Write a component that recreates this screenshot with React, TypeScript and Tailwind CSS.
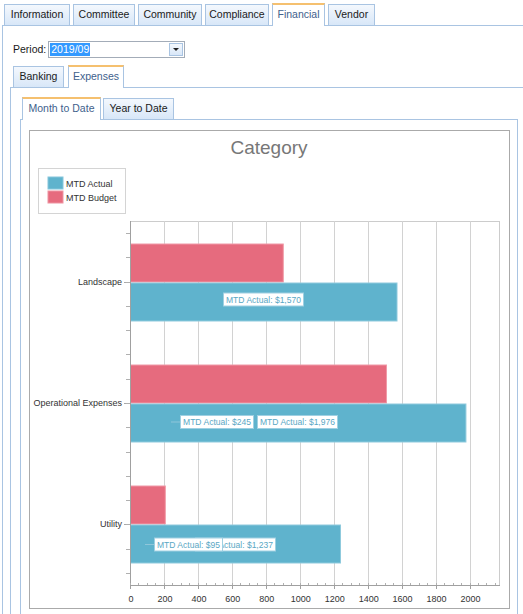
import React from 'react';

const FONT = { fontFamily: '"Liberation Sans", Arial, sans-serif' };

type TabProps = { label: string; w: number; selected?: boolean };

function Tab({ label, w, selected }: TabProps) {
  if (selected) {
    return (
      <div
        className="relative -mb-px flex h-[23px] items-center justify-center border-x border-[#a9c4e2] border-t-2 border-t-[#f5c06f] bg-white pb-px text-[#41618c]"
        style={{ width: w }}
      >
        {label}
      </div>
    );
  }
  return (
    <div
      className="flex h-[21px] items-center justify-center border border-b-0 border-[#a9c4e2] bg-gradient-to-b from-[#f4f8fd] to-[#d8e7f8] text-[#1a1a1a]"
      style={{ width: w }}
    >
      {label}
    </div>
  );
}

const X0 = 100; // axis x inside chart box
const SCALE = 0.16975;
const PLOT_TOP = 90;
const PLOT_BOTTOM = 454;
const PLOT_RIGHT = 469;
const BAND = (PLOT_BOTTOM - PLOT_TOP) / 3;

const data = [
  { name: 'Landscape', budget: 900, actual: 1570 },
  { name: 'Operational Expenses', budget: 1508, actual: 1976 },
  { name: 'Utility', budget: 205, actual: 1237 },
];

function xv(v: number) {
  return X0 + v * SCALE;
}

function DataLabel({ x, y, w, text, lead }: { x: number; y: number; w: number; text: string; lead?: number }) {
  return (
    <g>
      {lead !== undefined && <line x1={lead} y1={y} x2={x} y2={y} stroke="#8fc6da" strokeWidth={1} />}
      <rect x={x + 0.5} y={y - 6.5} width={w} height={13} fill="#ffffff" stroke="#9fd0e2" strokeWidth={1} />
      <text
        x={x + 3}
        y={y + 3.4}
        fontSize={9.5}
        fill="#5aa7c4"
        textLength={w - 5}
        lengthAdjust="spacingAndGlyphs"
        style={FONT}
      >
        {text}
      </text>
    </g>
  );
}

function Chart() {
  const grid = Array.from({ length: 11 }, (_, i) => i * 200);
  const minor = Array.from({ length: 44 }, (_, i) => i * 50).filter((v) => xv(v) < PLOT_RIGHT);
  const yTicks = Array.from({ length: 15 }, (_, i) => PLOT_TOP + BAND / 10 + (i * BAND) / 5);

  return (
    <svg width={479} height={477} className="block" style={FONT}>
      <text x={239} y={23} textAnchor="middle" fontSize={19} fill="#777777">
        Category
      </text>

      <rect x={8.5} y={37.5} width={87} height={45} fill="#ffffff" stroke="#d4d4d4" />
      <rect x={18} y={46} width={15} height={12} fill="#5fb3cd" stroke="#86c6db" />
      <rect x={18} y={60} width={15} height={12} fill="#e66b7e" stroke="#ee94a1" />
      <text x={36} y={55.5} fontSize={9} fill="#333333">MTD Actual</text>
      <text x={36} y={69.5} fontSize={9} fill="#333333">MTD Budget</text>

      <rect x={X0 + 0.5} y={PLOT_TOP + 0.5} width={PLOT_RIGHT - X0} height={PLOT_BOTTOM - PLOT_TOP} fill="#ffffff" stroke="#cccccc" />
      {grid.map((v) => (
        <line key={v} x1={Math.round(xv(v)) + 0.5} y1={PLOT_TOP} x2={Math.round(xv(v)) + 0.5} y2={PLOT_BOTTOM} stroke="#d2d2d2" />
      ))}

      {data.map((d, i) => {
        const c = Math.round(PLOT_TOP + BAND * (i + 0.5));
        return (
          <g key={d.name}>
            <rect x={X0 + 0.5} y={c - 38} width={d.budget * SCALE} height={38} fill="#e66b7e" stroke="#f09aa7" strokeWidth={1} />
            <rect x={X0 + 0.5} y={c + 1} width={d.actual * SCALE} height={38} fill="#5fb3cd" stroke="#8fcadd" strokeWidth={1} />
            <text x={92} y={c + 3} textAnchor="end" fontSize={9} fill="#333333">
              {d.name}
            </text>
            <line x1={94} y1={c + 0.5} x2={X0} y2={c + 0.5} stroke="#a8a8a8" />
          </g>
        );
      })}

      <DataLabel x={193} y={168.5} w={80} text="MTD Actual: $1,570" />
      <DataLabel x={150} y={291} w={73} text="MTD Actual: $245" lead={141} />
      <DataLabel x={227} y={291} w={80} text="MTD Actual: $1,976" />
      <DataLabel x={165} y={413.5} w={80} text="MTD Actual: $1,237" />
      <DataLabel x={124} y={413.5} w={68} text="MTD Actual: $95" lead={115} />

      <line x1={X0 + 0.5} y1={PLOT_TOP} x2={X0 + 0.5} y2={PLOT_BOTTOM + 1} stroke="#a0a0a0" />
      <line x1={X0} y1={PLOT_BOTTOM + 0.5} x2={PLOT_RIGHT + 1} y2={PLOT_BOTTOM + 0.5} stroke="#a0a0a0" />
      {yTicks.map((y) => (
        <line key={y} x1={96} y1={Math.round(y) + 0.5} x2={X0} y2={Math.round(y) + 0.5} stroke="#b0b0b0" />
      ))}
      {minor.map((v) => (
        <line key={v} x1={Math.round(xv(v)) + 0.5} y1={PLOT_BOTTOM - 2} x2={Math.round(xv(v)) + 0.5} y2={PLOT_BOTTOM} stroke="#b0b0b0" />
      ))}
      {grid.map((v) => (
        <g key={v}>
          <line x1={Math.round(xv(v)) + 0.5} y1={PLOT_BOTTOM} x2={Math.round(xv(v)) + 0.5} y2={PLOT_BOTTOM + 4} stroke="#a0a0a0" />
          <text x={xv(v) + 1} y={471} textAnchor="middle" fontSize={9} fill="#333333">
            {v}
          </text>
        </g>
      ))}
    </svg>
  );
}

export default function App() {
  return (
    <div className="h-[614px] w-[523px] overflow-hidden bg-white text-[10.5px]" style={FONT}>
      <div className="flex h-[25px] items-end gap-[3px] pl-[4px]">
        <Tab label="Information" w={66} />
        <Tab label="Committee" w={62} />
        <Tab label="Community" w={64} />
        <Tab label="Compliance" w={64} />
        <Tab label="Financial" w={53} selected />
        <Tab label="Vendor" w={47} />
      </div>

      <div className="ml-[2px] h-[589px] w-[560px] border-l border-t border-[#a9c4e2] pl-[10px]">
        <div className="mt-[15px] flex h-[17px] items-center gap-[2px]">
          <span className="text-[#1a1a1a]">Period:</span>
          <div className="flex h-[17px] w-[137px] items-center border border-[#a3acb8] bg-white pl-px">
            <span className="bg-[#3399ff] px-px leading-[13px] text-white">2019/09</span>
            <div className="ml-auto mr-px flex h-[13px] w-[14px] items-center justify-center border border-[#a9c4e2] bg-gradient-to-b from-[#f4f8fd] to-[#d8e7f8]">
              <div className="h-0 w-0 border-x-[3px] border-t-[3px] border-x-transparent border-t-[#222]" />
            </div>
          </div>
        </div>

        <div className="-ml-[3px] mt-[6px]">
          <div className="flex h-[23px] items-end gap-[4px] pl-[3px]">
            <Tab label="Banking" w={51} />
            <Tab label="Expenses" w={56} selected />
          </div>
          <div className="h-[600px] w-[560px] border-l border-t border-[#a9c4e2] pl-[9px] pt-[8px]">
            <div className="flex h-[23px] items-end gap-[2px] pl-[2px]">
              <Tab label="Month to Date" w={79} selected />
              <Tab label="Year to Date" w={71} />
            </div>
            <div className="h-[600px] w-[498px] border-x border-t border-[#a9c4e2] pl-[8px] pt-[10px]">
              <div className="h-[479px] w-[481px] border border-[#aaaaaa] bg-white">
                <Chart />
              </div>
            </div>
          </div>
        </div>
      </div>
    </div>
  );
}
